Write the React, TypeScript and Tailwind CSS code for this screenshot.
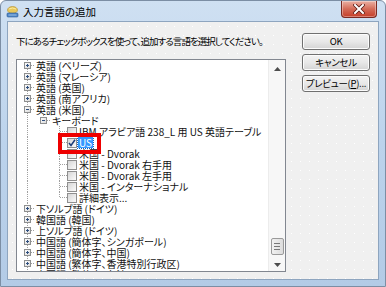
import React from "react";

type Kind = "plus" | "minus" | "check";

type TreeRow = {
  level: 0 | 1 | 2;
  label: string;
  kind: Kind;
  rails?: boolean[];
  last?: boolean;
  checked?: boolean;
  selected?: boolean;
};

const ROWS: TreeRow[] = [
  { level: 0, label: "英語 (ベリーズ)", kind: "plus" },
  { level: 0, label: "英語 (マレーシア)", kind: "plus" },
  { level: 0, label: "英語 (英国)", kind: "plus" },
  { level: 0, label: "英語 (南アフリカ)", kind: "plus" },
  { level: 0, label: "英語 (米国)", kind: "minus" },
  { level: 1, label: "キーボード", kind: "minus", rails: [true], last: true },
  { level: 2, label: "IBM アラビア語 238_L 用 US 英語テーブル", kind: "check", rails: [true, false] },
  { level: 2, label: "US", kind: "check", rails: [true, false], checked: true, selected: true },
  { level: 2, label: "米国 - Dvorak", kind: "check", rails: [true, false] },
  { level: 2, label: "米国 - Dvorak 右手用", kind: "check", rails: [true, false] },
  { level: 2, label: "米国 - Dvorak 左手用", kind: "check", rails: [true, false] },
  { level: 2, label: "米国 - インターナショナル", kind: "check", rails: [true, false] },
  { level: 2, label: "詳細表示...", kind: "check", rails: [true, false], last: true },
  { level: 0, label: "下ソルブ語 (ドイツ)", kind: "plus" },
  { level: 0, label: "韓国語 (韓国)", kind: "plus" },
  { level: 0, label: "上ソルブ語 (ドイツ)", kind: "plus" },
  { level: 0, label: "中国語 (簡体字、シンガポール)", kind: "plus" },
  { level: 0, label: "中国語 (簡体字、中国)", kind: "plus" },
  { level: 0, label: "中国語 (繁体字、香港特別行政区)", kind: "plus" },
  { level: 0, label: "中国語 (繁体字、台湾)", kind: "plus" },
];

const LINE = "#a0a0a0";

function Rail({ on }: { on: boolean }) {
  return (
    <svg width="16" height="11" className="shrink-0">
      {on && (
        <line x1="3.5" y1="0" x2="3.5" y2="11" stroke={LINE} strokeDasharray="1 1" />
      )}
    </svg>
  );
}

function Expander({ open, above, below }: { open: boolean; above: boolean; below: boolean }) {
  return (
    <svg width="11" height="11" className="shrink-0">
      <defs>
        <linearGradient id="exp" x1="0" y1="0" x2="1" y2="1">
          <stop offset="0" stopColor="#ffffff" />
          <stop offset="1" stopColor="#d8d8d8" />
        </linearGradient>
      </defs>
      {above && <line x1="3.5" y1="0" x2="3.5" y2="2" stroke={LINE} strokeDasharray="1 1" />}
      {below && <line x1="3.5" y1="9" x2="3.5" y2="11" stroke={LINE} strokeDasharray="1 1" />}
      <line x1="7" y1="5.5" x2="11" y2="5.5" stroke={LINE} strokeDasharray="1 1" />
      <rect x="0.5" y="2.5" width="6" height="6" fill="url(#exp)" stroke="#8e8f8f" />
      <line x1="2" y1="5.5" x2="5" y2="5.5" stroke="#2f4f7f" />
      {!open && <line x1="3.5" y1="4" x2="3.5" y2="7" stroke="#2f4f7f" />}
    </svg>
  );
}

function Branch({ last }: { last: boolean }) {
  return (
    <svg width="11" height="11" className="shrink-0">
      <line x1="3.5" y1="0" x2="3.5" y2={last ? 5.5 : 11} stroke={LINE} strokeDasharray="1 1" />
      <line x1="4" y1="5.5" x2="11" y2="5.5" stroke={LINE} strokeDasharray="1 1" />
    </svg>
  );
}

function CheckBox({ checked }: { checked?: boolean }) {
  return (
    <div className="flex h-[10px] w-[10px] shrink-0 items-center justify-center border border-[#8f8f8f] bg-gradient-to-br from-[#d6d6d6] to-[#fbfbfb]">
      {checked && (
        <svg width="8" height="8" viewBox="0 0 8 8">
          <path d="M1 4 L3 6.5 L7 0.8" fill="none" stroke="#1c3c78" strokeWidth="1.5" />
        </svg>
      )}
    </div>
  );
}

function Row({ row }: { row: TreeRow }) {
  const rails = row.rails ?? [];
  return (
    <div className="flex h-[11px] items-center whitespace-nowrap pl-[7px] leading-[11px]">
      {rails.map((on, i) => (
        <Rail key={i} on={on} />
      ))}
      {row.kind === "check" ? (
        <>
          <Branch last={!!row.last} />
          <CheckBox checked={row.checked} />
          <span
            className={
              row.selected
                ? "ml-[1px] bg-[#3399ff] px-[1px] text-white outline outline-1 outline-dotted outline-[#1a5fb4]"
                : "ml-[2px]"
            }
          >
            {row.label}
          </span>
        </>
      ) : (
        <>
          <Expander open={row.kind === "minus"} above={true} below={!row.last} />
          <span className="ml-[1px]">{row.label}</span>
        </>
      )}
    </div>
  );
}

function Button({ children }: { children: React.ReactNode }) {
  return (
    <div className="flex h-[17px] w-[68px] items-center justify-center whitespace-nowrap rounded-[3px] border border-[#707070] bg-gradient-to-b from-[#f3f3f3] via-[#e8e8e8] to-[#d4d4d4] text-[9.5px] leading-none tracking-[-0.3px] text-black shadow-[inset_0_0_0_1px_#fcfcfc]">
      {children}
    </div>
  );
}

function Scrollbar() {
  return (
    <div className="flex w-[17px] shrink-0 flex-col items-center border-l border-[#ececec] bg-[#f7f7f7]">
      <div className="flex h-[17px] w-full items-center justify-center">
        <svg width="7" height="4">
          <path d="M0 4 L3.5 0 L7 4 Z" fill="#4d4d4d" />
        </svg>
      </div>
      <div className="flex-1" />
      <div className="mb-[4px] flex h-[17px] w-[13px] flex-col items-center justify-center gap-[2px] rounded-[2px] border border-[#9a9a9a] bg-gradient-to-r from-[#f1f1f1] to-[#dcdcdc]">
        <div className="h-px w-[6px] bg-[#777]" />
        <div className="h-px w-[6px] bg-[#777]" />
        <div className="h-px w-[6px] bg-[#777]" />
      </div>
      <div className="flex h-[12px] w-full items-center justify-center">
        <svg width="7" height="4">
          <path d="M0 0 L3.5 4 L7 0 Z" fill="#4d4d4d" />
        </svg>
      </div>
    </div>
  );
}

function TitleIcon() {
  return (
    <svg width="13" height="12" viewBox="0 0 13 12" className="shrink-0">
      <ellipse cx="6.5" cy="4" rx="5" ry="3.5" fill="#e7c75a" stroke="#b08a2a" strokeWidth="0.6" />
      <path d="M3 3 Q6.5 1 10 3" fill="none" stroke="#fff3b0" strokeWidth="0.8" />
      <rect x="1" y="7" width="11" height="4" rx="1" fill="#4f86c6" stroke="#2e5b93" strokeWidth="0.6" />
      <path d="M2.5 9 H10.5" stroke="#cfe2f7" strokeWidth="0.6" />
    </svg>
  );
}

function CloseButton() {
  return (
    <div className="mr-[8px] flex h-[17px] w-[36px] items-center justify-center rounded-b-[4px] border border-t-0 border-[#7a2a22] bg-gradient-to-b from-[#eab0a4] via-[#d46b58] to-[#c43c27] shadow-[inset_0_0_0_1px_rgba(255,255,255,0.35)]">
      <svg width="12" height="10" viewBox="0 0 12 10">
        <path d="M2 1 L10 9 M10 1 L2 9" stroke="#5a1a14" strokeWidth="3.6" strokeLinecap="square" />
        <path d="M2 1 L10 9 M10 1 L2 9" stroke="#ffffff" strokeWidth="2" strokeLinecap="square" />
      </svg>
    </div>
  );
}

export default function App() {
  return (
    <div className="h-[287px] w-[386px] overflow-hidden bg-white font-['Noto_Sans_CJK_JP','Noto_Sans',sans-serif] [font-feature-settings:'palt']">
      <div className="flex h-full w-full flex-col rounded-t-[6px] border border-[#7c8ea4] bg-gradient-to-b from-[#cfe0f2] via-[#bcd3ec] to-[#b3cbe6]">
        {/* title bar */}
        <div className="flex h-[20px] shrink-0 items-start">
          <div className="flex items-center gap-[4px] pl-[5px] pt-[5px]">
            <TitleIcon />
            <span className="text-[10.5px] leading-[12px] text-black">入力言語の追加</span>
          </div>
          <div className="flex-1" />
          <CloseButton />
        </div>

        {/* client area */}
        <div className="mx-[6px] mb-[6px] flex flex-1 border border-[#8ea5bf] bg-[#f0f0f0] bg-[radial-gradient(circle,#ffffff_0.6px,transparent_0.9px)] bg-[length:9px_9px]">
          <div className="flex flex-col pb-[7px] pl-[8px] pt-[13px]">
            <p className="whitespace-nowrap text-[9.5px] leading-[12px] tracking-[-0.95px] text-black">
              下にあるチェックボックスを使って、追加する言語を選択してください。
            </p>
            <div className="relative mt-[12px] flex h-[213px] w-[270px] border border-[#828790] bg-white">
              <div className="flex-1 overflow-hidden text-[10px] text-[#111]">
                {ROWS.map((r, i) => (
                  <Row key={i} row={r} />
                ))}
              </div>
              <Scrollbar />
              {/* red annotation */}
              <div className="absolute left-[41px] top-[73px] h-[21px] w-[43px] border-[4px] border-[#ee0000]" />
            </div>
          </div>
          <div className="ml-[16px] flex flex-col gap-[4px] pt-[11px]">
            <Button>OK</Button>
            <Button>キャンセル</Button>
            <Button>
              プレビュー(<span className="underline">P</span>)...
            </Button>
          </div>
        </div>
      </div>
    </div>
  );
}
